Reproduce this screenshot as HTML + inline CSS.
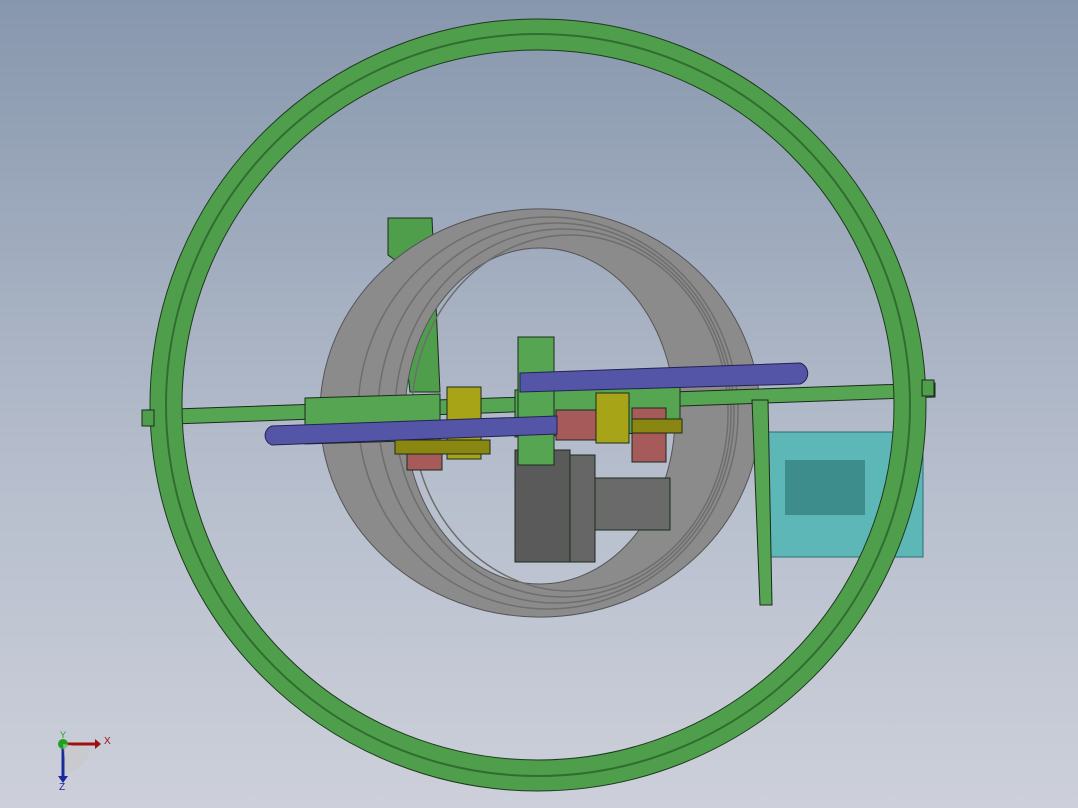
<!DOCTYPE html>
<html><head><style>
html,body{margin:0;padding:0;width:1078px;height:808px;overflow:hidden;background:linear-gradient(#8797ad,#b4bccb 55%,#cdd0da);}
svg{position:absolute;left:0;top:0}
</style></head><body>
<svg width="1078" height="808" viewBox="0 0 1078 808" font-family="Liberation Sans, sans-serif">
<g stroke="#1c2a1c" stroke-width="1">
<!-- left plate -->
<polygon points="388,218 432,218 440,392 410,392 395,260 388,255" fill="#4f9e4c"/>
<!-- gray coil -->
<path fill-rule="evenodd" fill="#8b8b8b" stroke="#555" d="M320,413 a220,204 0 1,0 440,0 a220,204 0 1,0 -440,0 Z M405,416 a135,168 0 1,0 270,0 a135,168 0 1,0 -270,0 Z"/>
<g fill="none" stroke="#6e6e6e" stroke-width="1.5">
<ellipse cx="548" cy="413" rx="190" ry="196"/>
<ellipse cx="556" cy="413" rx="178" ry="190"/>
<ellipse cx="563" cy="413" rx="168" ry="184"/>
<ellipse cx="570" cy="413" rx="158" ry="178"/>
</g>
<!-- main horizontal shaft -->
<polygon points="145,410 935,383 935,397 145,425" fill="#55a552"/>
<polygon points="305,398 440,394 440,440 305,444" fill="#55a552"/>
<polygon points="515,390 680,385 680,432 515,437" fill="#55a552"/>
<!-- cyan box -->
<rect x="768" y="432" width="155" height="125" fill="#5db7b7" stroke="#2a6f6f"/>
<rect x="785" y="460" width="80" height="55" fill="#3d8d8d" stroke="none"/>
<polygon points="752,400 768,400 772,605 760,605" fill="#55a552"/>
<!-- gray motor -->
<rect x="595" y="478" width="75" height="52" fill="#6a6a6a"/>
<rect x="515" y="450" width="55" height="112" fill="#5a5a5a"/>
<rect x="570" y="455" width="25" height="107" fill="#666"/>
<!-- red -->
<rect x="407" y="450" width="35" height="20" fill="#a65a5a"/>
<rect x="632" y="408" width="34" height="54" fill="#a65a5a"/>
<rect x="556" y="410" width="40" height="30" fill="#a65a5a"/>
<!-- yellow -->
<rect x="447" y="387" width="34" height="72" fill="#a8a418"/>
<rect x="596" y="393" width="33" height="50" fill="#a8a418"/>
<rect x="632" y="419" width="50" height="14" fill="#8a8612"/>
<rect x="395" y="440" width="95" height="14" fill="#8a8612"/>
<!-- green vertical post -->
<rect x="518" y="337" width="36" height="128" fill="#55a552"/>
<!-- blue rods -->
<path d="M272,426 L557,416 L557,434 L272,445 a10,10 0 0,1 0,-19 Z" fill="#5555a8" stroke="#222250"/>
<path d="M520,373 L800,363 a11,11 0 0,1 0,21 L520,392 Z" fill="#5555a8" stroke="#222250"/>
<!-- big green ring -->
<path fill-rule="evenodd" fill="#4f9e4c" stroke="#1e3a1e" d="M150,405 a388,386 0 1,0 776,0 a388,386 0 1,0 -776,0 Z M182,405 a356,355 0 1,0 712,0 a356,355 0 1,0 -712,0 Z"/>
<ellipse cx="538" cy="405" rx="372" ry="371" fill="none" stroke="#2f6e2f" stroke-width="2"/>
<rect x="142" y="410" width="12" height="16" fill="#4f9e4c"/>
<rect x="922" y="380" width="12" height="16" fill="#4f9e4c"/>
</g>
<!-- triad -->
<line x1="63" y1="744" x2="95" y2="744" stroke="#a01010" stroke-width="3"/>
<polygon points="95,739 101,744 95,749" fill="#a01010"/>
<line x1="63" y1="744" x2="63" y2="776" stroke="#1a2a9a" stroke-width="3"/>
<polygon points="58,776 63,783 68,776" fill="#1a2a9a"/>
<circle cx="63" cy="744" r="5" fill="#20a020"/>
<path d="M63,744 L90,748 A26,26 0 0 1 66,772 Z" fill="#c8c8c8" opacity="0.6"/>
<text x="104" y="744" font-size="10" fill="#a01010">X</text>
<text x="59" y="790" font-size="10" fill="#1a2a9a">Z</text>
<text x="60" y="738" font-size="9" fill="#20a020">Y</text>
</svg>
</body></html>
